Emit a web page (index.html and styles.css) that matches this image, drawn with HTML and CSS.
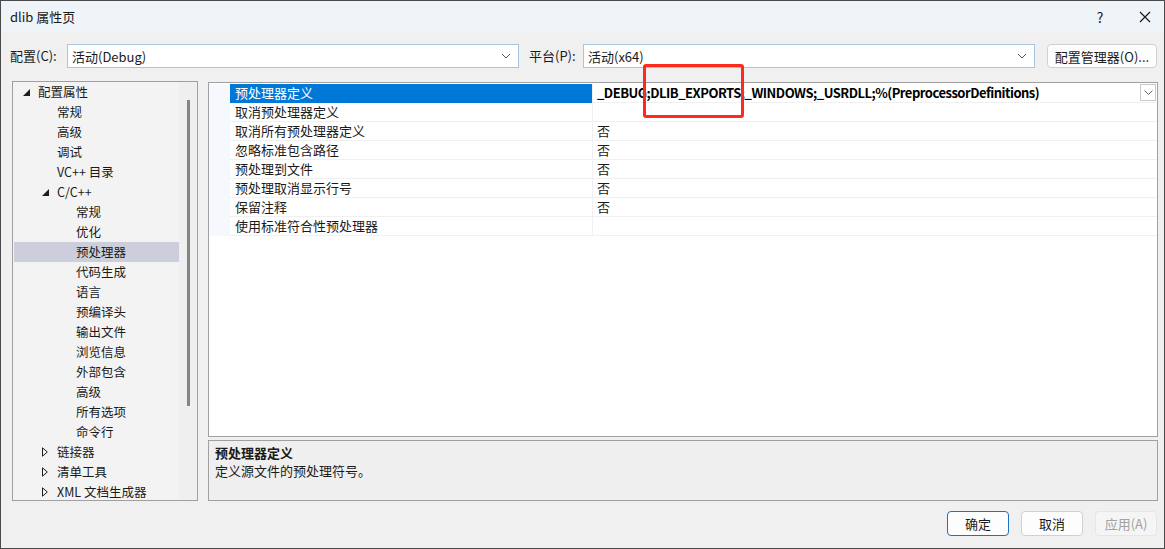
FILE: index.html
```html
<!DOCTYPE html>
<html lang="zh-CN">
<head>
	<meta charset="UTF-8">
	<title>dlib 属性页</title>
	<link rel="stylesheet" href="styles.css">
</head>
<body>
	<div class="window">
		<div class="titlebar">
			<span class="title">dlib 属性页</span>
			<span class="tb_help">?</span>
			<span class="tb_close">
				<svg width="12" height="12" viewBox="0 0 12 12"><path d="M1 1L11 11M11 1L1 11" stroke="#1a1a1a" stroke-width="1.2" fill="none"/></svg>
			</span>
		</div>

		<div class="toolbar">
			<label class="lbl lbl_cfg">配置(C):</label>
			<div class="combo">
				<span>活动(Debug)</span>
				<svg class="chev" width="10" height="6" viewBox="0 0 10 6"><path d="M1 1L5 5L9 1" stroke="#555" stroke-width="1" fill="none"/></svg>
			</div>
			<label class="lbl lbl_plat">平台(P):</label>
			<div class="combo">
				<span>活动(x64)</span>
				<svg class="chev" width="10" height="6" viewBox="0 0 10 6"><path d="M1 1L5 5L9 1" stroke="#555" stroke-width="1" fill="none"/></svg>
			</div>
			<button class="btn btn_mgr">配置管理器(O)...</button>
		</div>

		<div class="main">
			<div class="tree">
				<ul class="tree_list">
					<li class="lv0"><span class="arr"><svg width="7" height="7" viewBox="0 0 7 7"><path d="M7 0L7 7L0 7Z" fill="#1e1e1e"/></svg></span>配置属性</li>
					<li class="lv1"><span class="arr"></span>常规</li>
					<li class="lv1"><span class="arr"></span>高级</li>
					<li class="lv1"><span class="arr"></span>调试</li>
					<li class="lv1"><span class="arr"></span>VC++ 目录</li>
					<li class="lv1"><span class="arr"><svg width="7" height="7" viewBox="0 0 7 7"><path d="M7 0L7 7L0 7Z" fill="#1e1e1e"/></svg></span>C/C++</li>
					<li class="lv2"><span class="arr"></span>常规</li>
					<li class="lv2"><span class="arr"></span>优化</li>
					<li class="lv2 cur"><span class="arr"></span>预处理器</li>
					<li class="lv2"><span class="arr"></span>代码生成</li>
					<li class="lv2"><span class="arr"></span>语言</li>
					<li class="lv2"><span class="arr"></span>预编译头</li>
					<li class="lv2"><span class="arr"></span>输出文件</li>
					<li class="lv2"><span class="arr"></span>浏览信息</li>
					<li class="lv2"><span class="arr"></span>外部包含</li>
					<li class="lv2"><span class="arr"></span>高级</li>
					<li class="lv2"><span class="arr"></span>所有选项</li>
					<li class="lv2"><span class="arr"></span>命令行</li>
					<li class="lv1"><span class="arr"><svg width="6" height="10" viewBox="0 0 6 10"><path d="M0.5 0.8L5.3 5L0.5 9.2Z" fill="none" stroke="#1e1e1e" stroke-width="1"/></svg></span>链接器</li>
					<li class="lv1"><span class="arr"><svg width="6" height="10" viewBox="0 0 6 10"><path d="M0.5 0.8L5.3 5L0.5 9.2Z" fill="none" stroke="#1e1e1e" stroke-width="1"/></svg></span>清单工具</li>
					<li class="lv1"><span class="arr"><svg width="6" height="10" viewBox="0 0 6 10"><path d="M0.5 0.8L5.3 5L0.5 9.2Z" fill="none" stroke="#1e1e1e" stroke-width="1"/></svg></span>XML 文档生成器</li>
				</ul>
				<div class="vscroll"><div class="thumb"></div></div>
			</div>

			<div class="right">
				<div class="grid">
					<div class="row">
						<div class="gutter"></div>
						<div class="name sel">预处理器定义</div>
						<div class="val bold">_DEBUG;DLIB_EXPORTS;_WINDOWS;_USRDLL;%(PreprocessorDefinitions)
							<span class="dd"><svg width="9" height="5" viewBox="0 0 9 5"><path d="M0.5 0.5L4.5 4.5L8.5 0.5" stroke="#666" stroke-width="1" fill="none"/></svg></span>
						</div>
					</div>
					<div class="row"><div class="gutter"></div><div class="name">取消预处理器定义</div><div class="val"></div></div>
					<div class="row"><div class="gutter"></div><div class="name">取消所有预处理器定义</div><div class="val">否</div></div>
					<div class="row"><div class="gutter"></div><div class="name">忽略标准包含路径</div><div class="val">否</div></div>
					<div class="row"><div class="gutter"></div><div class="name">预处理到文件</div><div class="val">否</div></div>
					<div class="row"><div class="gutter"></div><div class="name">预处理取消显示行号</div><div class="val">否</div></div>
					<div class="row"><div class="gutter"></div><div class="name">保留注释</div><div class="val">否</div></div>
					<div class="row"><div class="gutter"></div><div class="name">使用标准符合性预处理器</div><div class="val"></div></div>
				</div>
				<div class="desc">
					<div class="desc_title">预处理器定义</div>
					<div class="desc_text">定义源文件的预处理符号。</div>
				</div>
			</div>
		</div>

		<div class="footer">
			<button class="btn btn_ok">确定</button>
			<button class="btn">取消</button>
			<button class="btn btn_off">应用(A)</button>
		</div>

		<div class="mark"></div>
	</div>
</body>
</html>
```

FILE: styles.css
```css
/*样式重置*/
body{margin: 0; padding: 0; background: #f0f0f0; font-family: "Noto Sans CJK SC", "Noto Sans", sans-serif; font-size: 13px; color: #1a1a1a;}
ul{margin: 0; padding: 0;}
li{list-style: none;}
button{font-family: inherit; font-size: 13px; color: #1a1a1a; padding: 0; cursor: pointer;}

/*窗口*/
.window{position: relative; width: 1165px; height: 549px; box-sizing: border-box; border: 1px solid #4a4a4a; background: #f0f0f0; display: flex; flex-direction: column; overflow: hidden;}

.titlebar{height: 31px; background: #eef4f7; display: flex; align-items: center; padding-left: 9px; flex: none;}
.title{font-size: 13px; flex: 1;}
.tb_help{width: 24px; text-align: center; font-size: 14px; margin-right: 21px;}
.tb_close{width: 24px; display: flex; justify-content: center; margin-right: 7px;}

/*工具栏*/
.toolbar{display: flex; align-items: center; padding: 12px 0 0 9px; height: 24px; flex: none;}
.lbl{font-size: 13px; line-height: 24px;}
.lbl_cfg{width: 57px;}
.lbl_plat{width: 54px; margin-left: 10px;}
.combo{width: 452px; height: 24px; box-sizing: border-box; border: 1px solid #a8c4df; background: #fff; display: flex; align-items: center; padding: 0 4px; font-size: 13px;}
.combo span{flex: 1;}
.chev{margin-right: 3px;}

.btn{width: 62px; height: 25px; box-sizing: border-box; border: 1px solid #d0d0d0; border-radius: 4px; background: #fdfdfd;}
.btn_mgr{width: 110px; height: 24px; margin-left: 12px;}
.btn_ok{border-color: #1f6fc4;}
.btn_off{background: #f5f5f5; border-color: #e6e6e6; color: #a2a2a2; cursor: default;}

/*主体*/
.main{display: flex; padding: 13px 0 0 11px; height: 420px; flex: none;}

.tree{width: 186px; height: 420px; box-sizing: border-box; border: 1px solid #a0a0a0; background: #f3f3f3; padding: 0 0 0 1px; display: flex; overflow: hidden;}
.tree_list{width: 165px; flex: none;}
.tree_list li{height: 20px; line-height: 20px; font-size: 12.5px; display: flex; align-items: center; white-space: nowrap;}
.tree_list li.cur{background: #cccedb;}
.arr{width: 16px; height: 20px; display: flex; align-items: center; flex: none;}
.arr svg{margin-left: 1px;}
.lv0{padding-left: 8px;}
.lv1{padding-left: 27px;}
.lv2{padding-left: 46px;}
.vscroll{width: 18px; background: #efefef; position: relative;}
.thumb{width: 3px; height: 306px; background: #858585; margin: 18px 0 0 8px;}

.right{margin-left: 10px; margin-top: 1px; width: 950px; display: flex; flex-direction: column;}

.grid{height: 355px; box-sizing: border-box; border: 1px solid #a0a0a0; background: #fff; padding-top: 1px;}
.row{display: flex; height: 19px;}
.gutter{width: 21px; background: #f5f8fc; flex: none;}
.name{width: 362px; flex: none; box-sizing: border-box; padding-left: 5px; line-height: 18px; border-bottom: 1px solid #f0f0f0; font-size: 13px; white-space: nowrap;}
.name.sel{background: #0078d7; color: #fff; border-bottom-color: #0078d7;}
.val{flex: 1; position: relative; box-sizing: border-box; padding-left: 4px; line-height: 18px; border-bottom: 1px solid #f0f0f0; border-left: 1px solid #f0f0f0; font-size: 13px; white-space: nowrap;}
.val.bold{font-weight: bold; color: #000; letter-spacing: -0.5px;}
.dd{position: absolute; right: 1px; top: 0; width: 16px; height: 17px; box-sizing: border-box; border: 1px solid #c8c8c8; background: #fff; display: flex; align-items: center; justify-content: center;}

.desc{height: 61px; margin-top: 3px; box-sizing: border-box; border: 1px solid #a0a0a0; background: #efefef; padding: 3px 0 0 6px;}
.desc_title{font-weight: bold; font-size: 13px; line-height: 18px;}
.desc_text{font-size: 13px; line-height: 18px;}

/*底部按钮*/
.footer{display: flex; justify-content: flex-end; gap: 12px; padding: 10px 7px 0 0;}

/*标注框*/
.mark{position: absolute; left: 642px; top: 63px; width: 101px; height: 54px; box-sizing: border-box; border: 3px solid #fe2a1c; border-radius: 3px;}
```
